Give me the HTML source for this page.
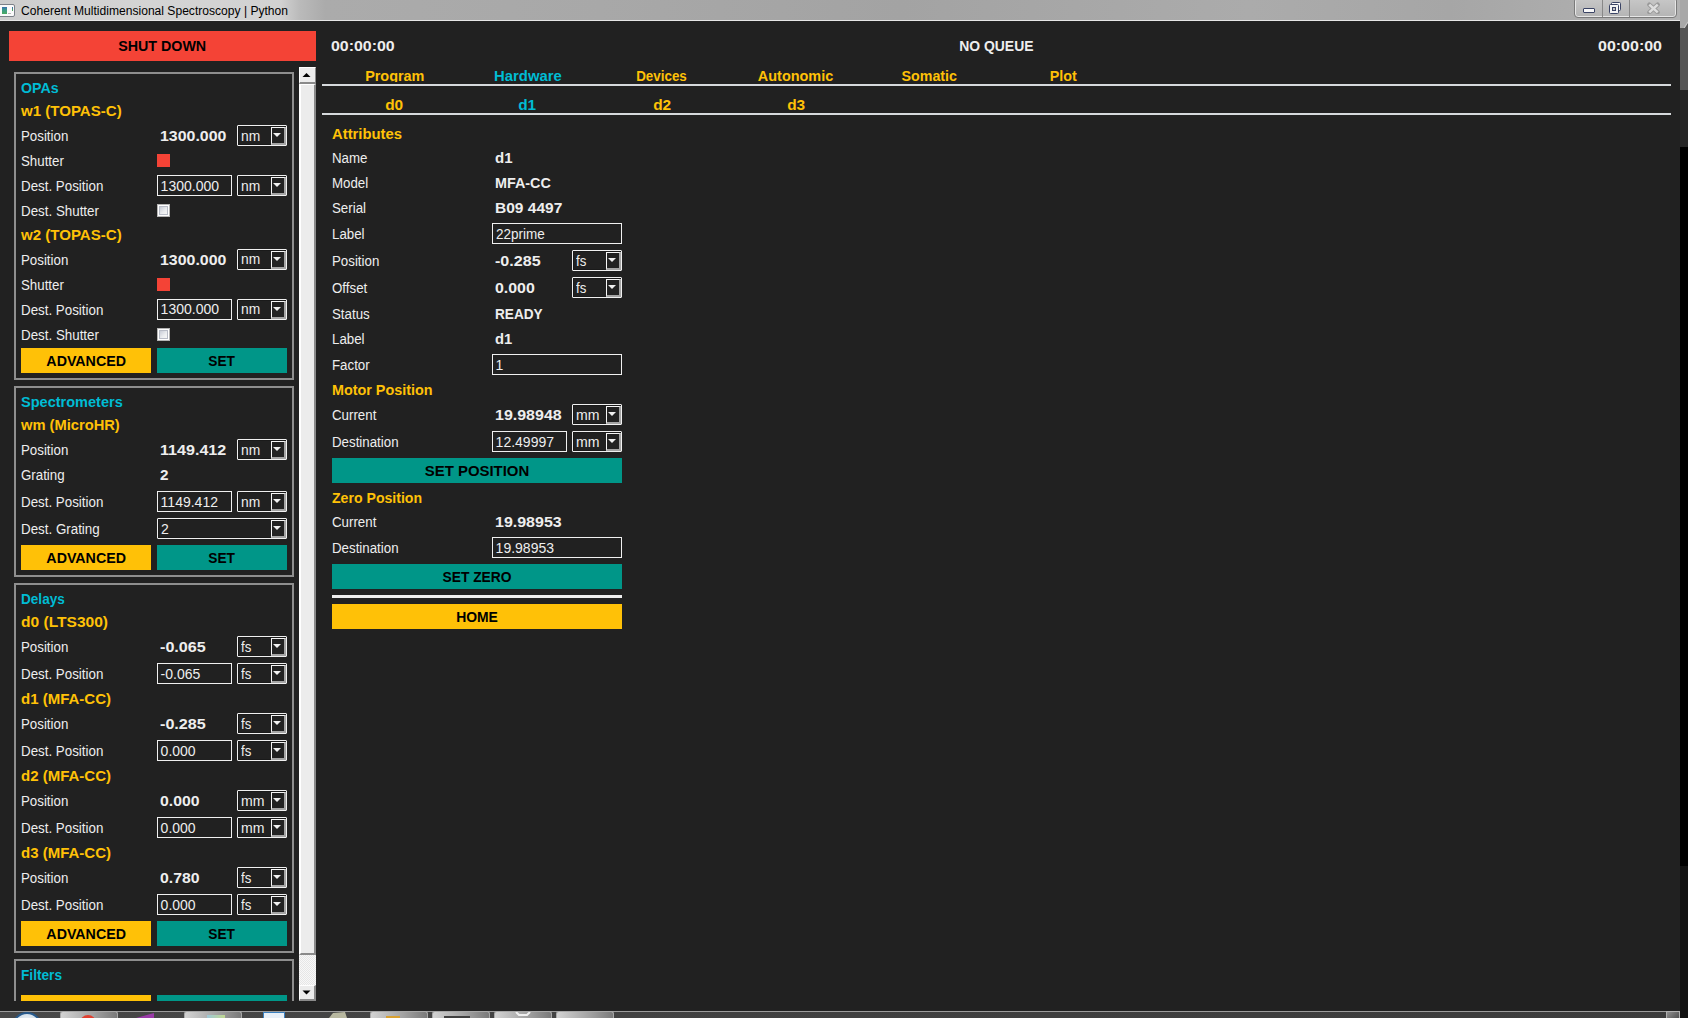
<!DOCTYPE html>
<html><head><meta charset="utf-8"><style>
html,body{margin:0;padding:0;}
body{width:1688px;height:1018px;overflow:hidden;position:relative;background:#212121;font-family:"Liberation Sans",sans-serif;}
.t{position:absolute;white-space:nowrap;line-height:20px;height:20px;}
</style></head><body>
<div style="position:absolute;left:0;top:0;width:1680px;height:20px;background:linear-gradient(to right,#cdcdcd 0,#d4d4d4 150px,#d2d2d2 280px,#bababa 300px,#ababab 325px,#a8a8a8 600px,#a3a3a3 900px,#ababab 1250px,#a6a6a6 1450px,#b2b2b2 1680px)"></div>
<div style="position:absolute;left:0px;top:20px;width:1680px;height:1px;background:#e6e6e6;"></div>
<div style="position:absolute;left:-4px;top:4px;width:19px;height:13px;box-sizing:border-box;border:1px solid #7c8088;border-radius:2px;background:#fafafa;"></div>
<div style="position:absolute;left:2px;top:7px;width:5px;height:7px;background:linear-gradient(#3c70b0,#3a9a8a 40%,#4aaa60);"></div>
<div style="position:absolute;left:12px;top:7px;width:1px;height:4px;background:linear-gradient(#3a6ab0,#50b050);"></div>
<div style="position:absolute;left:8px;top:13px;width:3px;height:1px;background:#b8b8b8;"></div>
<div class="t" style="left:21.00px;top:0.67px;font-size:12.5px;color:#000;transform:scaleX(0.9663);transform-origin:left 50%;">Coherent Multidimensional Spectroscopy | Python</div>
<div style="position:absolute;left:1574px;top:-3px;width:103px;height:21px;box-sizing:border-box;border:1px solid #7a7a7a;border-radius:4px;background:linear-gradient(#c8c8c8,#b4b4b4);box-shadow:inset 0 0 0 1px #e6e6e6"></div>
<div style="position:absolute;left:1602px;top:0px;width:1px;height:17px;background:#888;"></div>
<div style="position:absolute;left:1629px;top:0px;width:1px;height:17px;background:#888;"></div>
<div style="position:absolute;left:1583px;top:8px;width:12px;height:5px;box-sizing:border-box;border:1px solid #3b4465;border-radius:1px;background:#f8f8f8"></div>
<div style="position:absolute;left:1611px;top:2px;width:10px;height:9px;box-sizing:border-box;border:1px solid #3b4465;border-radius:1.5px;background:#f8f8f8"></div>
<div style="position:absolute;left:1609px;top:4px;width:10px;height:10px;box-sizing:border-box;border:1px solid #3b4465;border-radius:1.5px;background:#f4f4f4"></div>
<div style="position:absolute;left:1612px;top:7px;width:4px;height:4px;box-sizing:border-box;border:1px solid #3b4465;background:#c4c4c4"></div>
<svg style="position:absolute;left:1646px;top:2px" width="15" height="12"><path d="M3.3 2.6L11.7 10.4M11.7 2.6L3.3 10.4" stroke="#9a9a9a" stroke-width="4.2" stroke-linecap="round"/><path d="M3.3 2.6L11.7 10.4M11.7 2.6L3.3 10.4" stroke="#dedede" stroke-width="2.6"/></svg>
<div style="position:absolute;left:1680px;top:0px;width:8px;height:28px;background:#a8a8a8;"></div>
<svg style="position:absolute;left:1680px;top:20px" width="8" height="9"><path d="M0 9L0 8H4L8 2V9Z" fill="#555"/><path d="M0 8.5H3.8L8 2" stroke="#c8c8c8" stroke-width="1.2" fill="none"/></svg>
<div style="position:absolute;left:1680px;top:28px;width:8px;height:62px;background:#555;"></div>
<div style="position:absolute;left:1680px;top:90px;width:8px;height:57px;background:#262626;"></div>
<div style="position:absolute;left:1680px;top:147px;width:8px;height:719px;background:#000;"></div>
<div style="position:absolute;left:1680px;top:866px;width:8px;height:152px;background:#121212;"></div>
<div style="position:absolute;left:9px;top:31px;width:307px;height:30px;background:#f44336;"></div>
<div class="t" style="left:119.35px;top:36.15px;font-size:14.0px;font-weight:700;color:#000;transform:scaleX(1.0197);transform-origin:43.15px 50%;">SHUT DOWN</div>
<div style="position:absolute;left:0;top:67px;width:298px;height:934px;overflow:hidden">
<div style="position:absolute;left:0;top:-67px;width:298px;height:1018px">
<div style="position:absolute;left:14px;top:72px;width:280px;height:308px;box-sizing:border-box;border:2px solid #8e8e8e;"></div>
<div style="position:absolute;left:14px;top:386px;width:280px;height:191px;box-sizing:border-box;border:2px solid #8e8e8e;"></div>
<div style="position:absolute;left:14px;top:583px;width:280px;height:370px;box-sizing:border-box;border:2px solid #8e8e8e;"></div>
<div style="position:absolute;left:14px;top:959px;width:280px;height:71px;box-sizing:border-box;border:2px solid #8e8e8e;"></div>
<div class="t" style="left:21.00px;top:78.15px;font-size:14.0px;font-weight:700;color:#00bcd4;transform:scaleX(1.0162);transform-origin:left 50%;">OPAs</div>
<div class="t" style="left:21.05px;top:101.15px;font-size:14.0px;font-weight:700;color:#ffc107;transform:scaleX(1.0753);transform-origin:left 50%;">w1 (TOPAS-C)</div>
<div class="t" style="left:21.00px;top:126.15px;font-size:14.0px;color:#eeeeee;transform:scaleX(0.9500);transform-origin:left 50%;">Position</div>
<div class="t" style="left:160.30px;top:126.15px;font-size:14.0px;font-weight:700;color:#eeeeee;transform:scaleX(1.1370);transform-origin:left 50%;">1300.000</div>
<div style="position:absolute;left:237px;top:125px;width:50px;height:21px;box-sizing:border-box;border:1px solid #f0f0f0;border-radius:1px;box-shadow:inset 0 0 0 1px #1a1a1a;background:#212121;"></div>
<div style="position:absolute;left:271px;top:127px;width:15px;height:18px;box-sizing:border-box;border-top:1px solid #f6f6f6;border-left:1px solid #f6f6f6;border-right:2px solid #a4a4a4;border-bottom:2px solid #a4a4a4;background:#222;"></div>
<svg style="position:absolute;left:273px;top:133px" width="9" height="5"><path d="M0 0H8L4 4Z" fill="#f0f0f0"/></svg>
<div class="t" style="left:241.00px;top:125.65px;font-size:14.0px;color:#eeeeee;transform:scaleX(0.9871);transform-origin:left 50%;">nm</div>
<div class="t" style="left:21.00px;top:151.15px;font-size:14.0px;color:#eeeeee;transform:scaleX(0.9500);transform-origin:left 50%;">Shutter</div>
<div style="position:absolute;left:157px;top:154px;width:13px;height:13px;background:#f44336;"></div>
<div class="t" style="left:21.00px;top:176.15px;font-size:14.0px;color:#eeeeee;transform:scaleX(0.9536);transform-origin:left 50%;">Dest. Position</div>
<div style="position:absolute;left:157px;top:175px;width:75px;height:21px;box-sizing:border-box;border:1px solid #f0f0f0;background:#212121;"></div>
<div class="t" style="left:160.60px;top:175.65px;font-size:14.0px;color:#eeeeee;transform:scaleX(1.0000);transform-origin:left 50%;">1300.000</div>
<div style="position:absolute;left:237px;top:175px;width:50px;height:21px;box-sizing:border-box;border:1px solid #f0f0f0;border-radius:1px;box-shadow:inset 0 0 0 1px #1a1a1a;background:#212121;"></div>
<div style="position:absolute;left:271px;top:177px;width:15px;height:18px;box-sizing:border-box;border-top:1px solid #f6f6f6;border-left:1px solid #f6f6f6;border-right:2px solid #a4a4a4;border-bottom:2px solid #a4a4a4;background:#222;"></div>
<svg style="position:absolute;left:273px;top:183px" width="9" height="5"><path d="M0 0H8L4 4Z" fill="#f0f0f0"/></svg>
<div class="t" style="left:241.00px;top:175.65px;font-size:14.0px;color:#eeeeee;transform:scaleX(0.9871);transform-origin:left 50%;">nm</div>
<div class="t" style="left:21.00px;top:201.15px;font-size:14.0px;color:#eeeeee;transform:scaleX(0.9538);transform-origin:left 50%;">Dest. Shutter</div>
<div style="position:absolute;left:157px;top:204px;width:13px;height:13px;box-sizing:border-box;border:1px solid #b4b4b4;background:#fff;"></div>
<div style="position:absolute;left:159px;top:206px;width:9px;height:9px;box-sizing:border-box;border:1px solid #b8bcc6;background:linear-gradient(135deg,#c8ccd6,#eceef0 60%,#f6f6f6);"></div>
<div class="t" style="left:21.05px;top:224.65px;font-size:14.0px;font-weight:700;color:#ffc107;transform:scaleX(1.0753);transform-origin:left 50%;">w2 (TOPAS-C)</div>
<div class="t" style="left:21.00px;top:249.65px;font-size:14.0px;color:#eeeeee;transform:scaleX(0.9500);transform-origin:left 50%;">Position</div>
<div class="t" style="left:160.30px;top:249.65px;font-size:14.0px;font-weight:700;color:#eeeeee;transform:scaleX(1.1370);transform-origin:left 50%;">1300.000</div>
<div style="position:absolute;left:237px;top:248.5px;width:50px;height:21.0px;box-sizing:border-box;border:1px solid #f0f0f0;border-radius:1px;box-shadow:inset 0 0 0 1px #1a1a1a;background:#212121;"></div>
<div style="position:absolute;left:271px;top:250.5px;width:15px;height:18.0px;box-sizing:border-box;border-top:1px solid #f6f6f6;border-left:1px solid #f6f6f6;border-right:2px solid #a4a4a4;border-bottom:2px solid #a4a4a4;background:#222;"></div>
<svg style="position:absolute;left:273px;top:256.5px" width="9" height="5"><path d="M0 0H8L4 4Z" fill="#f0f0f0"/></svg>
<div class="t" style="left:241.00px;top:249.15px;font-size:14.0px;color:#eeeeee;transform:scaleX(0.9871);transform-origin:left 50%;">nm</div>
<div class="t" style="left:21.00px;top:274.65px;font-size:14.0px;color:#eeeeee;transform:scaleX(0.9500);transform-origin:left 50%;">Shutter</div>
<div style="position:absolute;left:157px;top:277.5px;width:13px;height:13.0px;background:#f44336;"></div>
<div class="t" style="left:21.00px;top:299.65px;font-size:14.0px;color:#eeeeee;transform:scaleX(0.9536);transform-origin:left 50%;">Dest. Position</div>
<div style="position:absolute;left:157px;top:298.5px;width:75px;height:21.0px;box-sizing:border-box;border:1px solid #f0f0f0;background:#212121;"></div>
<div class="t" style="left:160.60px;top:299.15px;font-size:14.0px;color:#eeeeee;transform:scaleX(1.0000);transform-origin:left 50%;">1300.000</div>
<div style="position:absolute;left:237px;top:298.5px;width:50px;height:21.0px;box-sizing:border-box;border:1px solid #f0f0f0;border-radius:1px;box-shadow:inset 0 0 0 1px #1a1a1a;background:#212121;"></div>
<div style="position:absolute;left:271px;top:300.5px;width:15px;height:18.0px;box-sizing:border-box;border-top:1px solid #f6f6f6;border-left:1px solid #f6f6f6;border-right:2px solid #a4a4a4;border-bottom:2px solid #a4a4a4;background:#222;"></div>
<svg style="position:absolute;left:273px;top:306.5px" width="9" height="5"><path d="M0 0H8L4 4Z" fill="#f0f0f0"/></svg>
<div class="t" style="left:241.00px;top:299.15px;font-size:14.0px;color:#eeeeee;transform:scaleX(0.9871);transform-origin:left 50%;">nm</div>
<div class="t" style="left:21.00px;top:324.65px;font-size:14.0px;color:#eeeeee;transform:scaleX(0.9538);transform-origin:left 50%;">Dest. Shutter</div>
<div style="position:absolute;left:157px;top:327.5px;width:13px;height:13.0px;box-sizing:border-box;border:1px solid #b4b4b4;background:#fff;"></div>
<div style="position:absolute;left:159px;top:329.5px;width:9px;height:9.0px;box-sizing:border-box;border:1px solid #b8bcc6;background:linear-gradient(135deg,#c8ccd6,#eceef0 60%,#f6f6f6);"></div>
<div style="position:absolute;left:21px;top:348px;width:130px;height:25px;background:#ffc107;"></div>
<div class="t" style="left:46.85px;top:351.15px;font-size:14.0px;font-weight:700;color:#000;transform:scaleX(1.0166);transform-origin:39.15px 50%;">ADVANCED</div>
<div style="position:absolute;left:157px;top:348px;width:130px;height:25px;background:#009688;"></div>
<div class="t" style="left:208.38px;top:351.15px;font-size:14.0px;font-weight:700;color:#000;transform:scaleX(0.9798);transform-origin:13.62px 50%;">SET</div>
<div class="t" style="left:21.00px;top:392.15px;font-size:14.0px;font-weight:700;color:#00bcd4;transform:scaleX(1.0382);transform-origin:left 50%;">Spectrometers</div>
<div class="t" style="left:21.05px;top:415.15px;font-size:14.0px;font-weight:700;color:#ffc107;transform:scaleX(1.0494);transform-origin:left 50%;">wm (MicroHR)</div>
<div class="t" style="left:21.00px;top:440.15px;font-size:14.0px;color:#eeeeee;transform:scaleX(0.9500);transform-origin:left 50%;">Position</div>
<div class="t" style="left:160.30px;top:440.15px;font-size:14.0px;font-weight:700;color:#eeeeee;transform:scaleX(1.1493);transform-origin:left 50%;">1149.412</div>
<div style="position:absolute;left:237px;top:439px;width:50px;height:21px;box-sizing:border-box;border:1px solid #f0f0f0;border-radius:1px;box-shadow:inset 0 0 0 1px #1a1a1a;background:#212121;"></div>
<div style="position:absolute;left:271px;top:441px;width:15px;height:18px;box-sizing:border-box;border-top:1px solid #f6f6f6;border-left:1px solid #f6f6f6;border-right:2px solid #a4a4a4;border-bottom:2px solid #a4a4a4;background:#222;"></div>
<svg style="position:absolute;left:273px;top:447px" width="9" height="5"><path d="M0 0H8L4 4Z" fill="#f0f0f0"/></svg>
<div class="t" style="left:241.00px;top:439.65px;font-size:14.0px;color:#eeeeee;transform:scaleX(0.9871);transform-origin:left 50%;">nm</div>
<div class="t" style="left:21.00px;top:465.15px;font-size:14.0px;color:#eeeeee;transform:scaleX(0.9500);transform-origin:left 50%;">Grating</div>
<div class="t" style="left:160.30px;top:465.15px;font-size:14.0px;font-weight:700;color:#eeeeee;transform:scaleX(1.0897);transform-origin:left 50%;">2</div>
<div class="t" style="left:21.00px;top:492.15px;font-size:14.0px;color:#eeeeee;transform:scaleX(0.9536);transform-origin:left 50%;">Dest. Position</div>
<div style="position:absolute;left:157px;top:491px;width:75px;height:21px;box-sizing:border-box;border:1px solid #f0f0f0;background:#212121;"></div>
<div class="t" style="left:160.60px;top:491.65px;font-size:14.0px;color:#eeeeee;transform:scaleX(1.0000);transform-origin:left 50%;">1149.412</div>
<div style="position:absolute;left:237px;top:491px;width:50px;height:21px;box-sizing:border-box;border:1px solid #f0f0f0;border-radius:1px;box-shadow:inset 0 0 0 1px #1a1a1a;background:#212121;"></div>
<div style="position:absolute;left:271px;top:493px;width:15px;height:18px;box-sizing:border-box;border-top:1px solid #f6f6f6;border-left:1px solid #f6f6f6;border-right:2px solid #a4a4a4;border-bottom:2px solid #a4a4a4;background:#222;"></div>
<svg style="position:absolute;left:273px;top:499px" width="9" height="5"><path d="M0 0H8L4 4Z" fill="#f0f0f0"/></svg>
<div class="t" style="left:241.00px;top:491.65px;font-size:14.0px;color:#eeeeee;transform:scaleX(0.9871);transform-origin:left 50%;">nm</div>
<div class="t" style="left:21.00px;top:519.15px;font-size:14.0px;color:#eeeeee;transform:scaleX(0.9538);transform-origin:left 50%;">Dest. Grating</div>
<div style="position:absolute;left:157px;top:518px;width:130px;height:21px;box-sizing:border-box;border:1px solid #f0f0f0;border-radius:1px;box-shadow:inset 0 0 0 1px #1a1a1a;background:#212121;"></div>
<div style="position:absolute;left:271px;top:520px;width:15px;height:18px;box-sizing:border-box;border-top:1px solid #f6f6f6;border-left:1px solid #f6f6f6;border-right:2px solid #a4a4a4;border-bottom:2px solid #a4a4a4;background:#222;"></div>
<svg style="position:absolute;left:273px;top:526px" width="9" height="5"><path d="M0 0H8L4 4Z" fill="#f0f0f0"/></svg>
<div class="t" style="left:161.00px;top:518.65px;font-size:14.0px;color:#eeeeee;transform:scaleX(1.0000);transform-origin:left 50%;">2</div>
<div style="position:absolute;left:21px;top:545px;width:130px;height:25px;background:#ffc107;"></div>
<div class="t" style="left:46.85px;top:548.15px;font-size:14.0px;font-weight:700;color:#000;transform:scaleX(1.0166);transform-origin:39.15px 50%;">ADVANCED</div>
<div style="position:absolute;left:157px;top:545px;width:130px;height:25px;background:#009688;"></div>
<div class="t" style="left:208.38px;top:548.15px;font-size:14.0px;font-weight:700;color:#000;transform:scaleX(0.9798);transform-origin:13.62px 50%;">SET</div>
<div class="t" style="left:21.00px;top:589.15px;font-size:14.0px;font-weight:700;color:#00bcd4;transform:scaleX(0.9701);transform-origin:left 50%;">Delays</div>
<div class="t" style="left:21.00px;top:612.15px;font-size:14.0px;font-weight:700;color:#ffc107;transform:scaleX(1.1111);transform-origin:left 50%;">d0 (LTS300)</div>
<div class="t" style="left:21.00px;top:637.15px;font-size:14.0px;color:#eeeeee;transform:scaleX(0.9500);transform-origin:left 50%;">Position</div>
<div class="t" style="left:160.30px;top:637.15px;font-size:14.0px;font-weight:700;color:#eeeeee;transform:scaleX(1.1537);transform-origin:left 50%;">-0.065</div>
<div style="position:absolute;left:237px;top:636px;width:50px;height:21px;box-sizing:border-box;border:1px solid #f0f0f0;border-radius:1px;box-shadow:inset 0 0 0 1px #1a1a1a;background:#212121;"></div>
<div style="position:absolute;left:271px;top:638px;width:15px;height:18px;box-sizing:border-box;border-top:1px solid #f6f6f6;border-left:1px solid #f6f6f6;border-right:2px solid #a4a4a4;border-bottom:2px solid #a4a4a4;background:#222;"></div>
<svg style="position:absolute;left:273px;top:644px" width="9" height="5"><path d="M0 0H8L4 4Z" fill="#f0f0f0"/></svg>
<div class="t" style="left:241.00px;top:636.65px;font-size:14.0px;color:#eeeeee;transform:scaleX(0.9450);transform-origin:left 50%;">fs</div>
<div class="t" style="left:21.00px;top:664.15px;font-size:14.0px;color:#eeeeee;transform:scaleX(0.9536);transform-origin:left 50%;">Dest. Position</div>
<div style="position:absolute;left:157px;top:663px;width:75px;height:21px;box-sizing:border-box;border:1px solid #f0f0f0;background:#212121;"></div>
<div class="t" style="left:160.60px;top:663.65px;font-size:14.0px;color:#eeeeee;transform:scaleX(1.0000);transform-origin:left 50%;">-0.065</div>
<div style="position:absolute;left:237px;top:663px;width:50px;height:21px;box-sizing:border-box;border:1px solid #f0f0f0;border-radius:1px;box-shadow:inset 0 0 0 1px #1a1a1a;background:#212121;"></div>
<div style="position:absolute;left:271px;top:665px;width:15px;height:18px;box-sizing:border-box;border-top:1px solid #f6f6f6;border-left:1px solid #f6f6f6;border-right:2px solid #a4a4a4;border-bottom:2px solid #a4a4a4;background:#222;"></div>
<svg style="position:absolute;left:273px;top:671px" width="9" height="5"><path d="M0 0H8L4 4Z" fill="#f0f0f0"/></svg>
<div class="t" style="left:241.00px;top:663.65px;font-size:14.0px;color:#eeeeee;transform:scaleX(0.9450);transform-origin:left 50%;">fs</div>
<div class="t" style="left:21.00px;top:689.15px;font-size:14.0px;font-weight:700;color:#ffc107;transform:scaleX(1.0714);transform-origin:left 50%;">d1 (MFA-CC)</div>
<div class="t" style="left:21.00px;top:714.15px;font-size:14.0px;color:#eeeeee;transform:scaleX(0.9500);transform-origin:left 50%;">Position</div>
<div class="t" style="left:160.30px;top:714.15px;font-size:14.0px;font-weight:700;color:#eeeeee;transform:scaleX(1.1537);transform-origin:left 50%;">-0.285</div>
<div style="position:absolute;left:237px;top:713px;width:50px;height:21px;box-sizing:border-box;border:1px solid #f0f0f0;border-radius:1px;box-shadow:inset 0 0 0 1px #1a1a1a;background:#212121;"></div>
<div style="position:absolute;left:271px;top:715px;width:15px;height:18px;box-sizing:border-box;border-top:1px solid #f6f6f6;border-left:1px solid #f6f6f6;border-right:2px solid #a4a4a4;border-bottom:2px solid #a4a4a4;background:#222;"></div>
<svg style="position:absolute;left:273px;top:721px" width="9" height="5"><path d="M0 0H8L4 4Z" fill="#f0f0f0"/></svg>
<div class="t" style="left:241.00px;top:713.65px;font-size:14.0px;color:#eeeeee;transform:scaleX(0.9450);transform-origin:left 50%;">fs</div>
<div class="t" style="left:21.00px;top:741.15px;font-size:14.0px;color:#eeeeee;transform:scaleX(0.9536);transform-origin:left 50%;">Dest. Position</div>
<div style="position:absolute;left:157px;top:740px;width:75px;height:21px;box-sizing:border-box;border:1px solid #f0f0f0;background:#212121;"></div>
<div class="t" style="left:160.60px;top:740.65px;font-size:14.0px;color:#eeeeee;transform:scaleX(1.0000);transform-origin:left 50%;">0.000</div>
<div style="position:absolute;left:237px;top:740px;width:50px;height:21px;box-sizing:border-box;border:1px solid #f0f0f0;border-radius:1px;box-shadow:inset 0 0 0 1px #1a1a1a;background:#212121;"></div>
<div style="position:absolute;left:271px;top:742px;width:15px;height:18px;box-sizing:border-box;border-top:1px solid #f6f6f6;border-left:1px solid #f6f6f6;border-right:2px solid #a4a4a4;border-bottom:2px solid #a4a4a4;background:#222;"></div>
<svg style="position:absolute;left:273px;top:748px" width="9" height="5"><path d="M0 0H8L4 4Z" fill="#f0f0f0"/></svg>
<div class="t" style="left:241.00px;top:740.65px;font-size:14.0px;color:#eeeeee;transform:scaleX(0.9450);transform-origin:left 50%;">fs</div>
<div class="t" style="left:21.00px;top:766.15px;font-size:14.0px;font-weight:700;color:#ffc107;transform:scaleX(1.0714);transform-origin:left 50%;">d2 (MFA-CC)</div>
<div class="t" style="left:21.00px;top:791.15px;font-size:14.0px;color:#eeeeee;transform:scaleX(0.9500);transform-origin:left 50%;">Position</div>
<div class="t" style="left:160.30px;top:791.15px;font-size:14.0px;font-weight:700;color:#eeeeee;transform:scaleX(1.1270);transform-origin:left 50%;">0.000</div>
<div style="position:absolute;left:237px;top:790px;width:50px;height:21px;box-sizing:border-box;border:1px solid #f0f0f0;border-radius:1px;box-shadow:inset 0 0 0 1px #1a1a1a;background:#212121;"></div>
<div style="position:absolute;left:271px;top:792px;width:15px;height:18px;box-sizing:border-box;border-top:1px solid #f6f6f6;border-left:1px solid #f6f6f6;border-right:2px solid #a4a4a4;border-bottom:2px solid #a4a4a4;background:#222;"></div>
<svg style="position:absolute;left:273px;top:798px" width="9" height="5"><path d="M0 0H8L4 4Z" fill="#f0f0f0"/></svg>
<div class="t" style="left:241.00px;top:790.65px;font-size:14.0px;color:#eeeeee;transform:scaleX(1.0064);transform-origin:left 50%;">mm</div>
<div class="t" style="left:21.00px;top:818.15px;font-size:14.0px;color:#eeeeee;transform:scaleX(0.9536);transform-origin:left 50%;">Dest. Position</div>
<div style="position:absolute;left:157px;top:817px;width:75px;height:21px;box-sizing:border-box;border:1px solid #f0f0f0;background:#212121;"></div>
<div class="t" style="left:160.60px;top:817.65px;font-size:14.0px;color:#eeeeee;transform:scaleX(1.0000);transform-origin:left 50%;">0.000</div>
<div style="position:absolute;left:237px;top:817px;width:50px;height:21px;box-sizing:border-box;border:1px solid #f0f0f0;border-radius:1px;box-shadow:inset 0 0 0 1px #1a1a1a;background:#212121;"></div>
<div style="position:absolute;left:271px;top:819px;width:15px;height:18px;box-sizing:border-box;border-top:1px solid #f6f6f6;border-left:1px solid #f6f6f6;border-right:2px solid #a4a4a4;border-bottom:2px solid #a4a4a4;background:#222;"></div>
<svg style="position:absolute;left:273px;top:825px" width="9" height="5"><path d="M0 0H8L4 4Z" fill="#f0f0f0"/></svg>
<div class="t" style="left:241.00px;top:817.65px;font-size:14.0px;color:#eeeeee;transform:scaleX(1.0064);transform-origin:left 50%;">mm</div>
<div class="t" style="left:21.00px;top:843.15px;font-size:14.0px;font-weight:700;color:#ffc107;transform:scaleX(1.0714);transform-origin:left 50%;">d3 (MFA-CC)</div>
<div class="t" style="left:21.00px;top:868.15px;font-size:14.0px;color:#eeeeee;transform:scaleX(0.9500);transform-origin:left 50%;">Position</div>
<div class="t" style="left:160.30px;top:868.15px;font-size:14.0px;font-weight:700;color:#eeeeee;transform:scaleX(1.1270);transform-origin:left 50%;">0.780</div>
<div style="position:absolute;left:237px;top:867px;width:50px;height:21px;box-sizing:border-box;border:1px solid #f0f0f0;border-radius:1px;box-shadow:inset 0 0 0 1px #1a1a1a;background:#212121;"></div>
<div style="position:absolute;left:271px;top:869px;width:15px;height:18px;box-sizing:border-box;border-top:1px solid #f6f6f6;border-left:1px solid #f6f6f6;border-right:2px solid #a4a4a4;border-bottom:2px solid #a4a4a4;background:#222;"></div>
<svg style="position:absolute;left:273px;top:875px" width="9" height="5"><path d="M0 0H8L4 4Z" fill="#f0f0f0"/></svg>
<div class="t" style="left:241.00px;top:867.65px;font-size:14.0px;color:#eeeeee;transform:scaleX(0.9450);transform-origin:left 50%;">fs</div>
<div class="t" style="left:21.00px;top:895.15px;font-size:14.0px;color:#eeeeee;transform:scaleX(0.9536);transform-origin:left 50%;">Dest. Position</div>
<div style="position:absolute;left:157px;top:894px;width:75px;height:21px;box-sizing:border-box;border:1px solid #f0f0f0;background:#212121;"></div>
<div class="t" style="left:160.60px;top:894.65px;font-size:14.0px;color:#eeeeee;transform:scaleX(1.0000);transform-origin:left 50%;">0.000</div>
<div style="position:absolute;left:237px;top:894px;width:50px;height:21px;box-sizing:border-box;border:1px solid #f0f0f0;border-radius:1px;box-shadow:inset 0 0 0 1px #1a1a1a;background:#212121;"></div>
<div style="position:absolute;left:271px;top:896px;width:15px;height:18px;box-sizing:border-box;border-top:1px solid #f6f6f6;border-left:1px solid #f6f6f6;border-right:2px solid #a4a4a4;border-bottom:2px solid #a4a4a4;background:#222;"></div>
<svg style="position:absolute;left:273px;top:902px" width="9" height="5"><path d="M0 0H8L4 4Z" fill="#f0f0f0"/></svg>
<div class="t" style="left:241.00px;top:894.65px;font-size:14.0px;color:#eeeeee;transform:scaleX(0.9450);transform-origin:left 50%;">fs</div>
<div style="position:absolute;left:21px;top:921px;width:130px;height:25px;background:#ffc107;"></div>
<div class="t" style="left:46.85px;top:924.15px;font-size:14.0px;font-weight:700;color:#000;transform:scaleX(1.0166);transform-origin:39.15px 50%;">ADVANCED</div>
<div style="position:absolute;left:157px;top:921px;width:130px;height:25px;background:#009688;"></div>
<div class="t" style="left:208.38px;top:924.15px;font-size:14.0px;font-weight:700;color:#000;transform:scaleX(0.9798);transform-origin:13.62px 50%;">SET</div>
<div class="t" style="left:21.00px;top:965.15px;font-size:14.0px;font-weight:700;color:#00bcd4;transform:scaleX(0.9762);transform-origin:left 50%;">Filters</div>
<div style="position:absolute;left:21px;top:995px;width:130px;height:25px;background:#ffc107;"></div>
<div style="position:absolute;left:157px;top:995px;width:130px;height:25px;background:#009688;"></div>
</div></div>
<div style="position:absolute;left:299px;top:67px;width:17px;height:934px;background:#f0f0f0;background-image:repeating-conic-gradient(#f8f8f8 0 25%,#e6e6e6 0 50%);background-size:2px 2px;"></div>
<div style="position:absolute;left:299px;top:67px;width:17px;height:17px;box-sizing:border-box;background:#ececec;border-top:1px solid #fff;border-left:1px solid #fff;border-right:1px solid #8a8a8a;border-bottom:2px solid #8a8a8a;"></div>
<svg style="position:absolute;left:302px;top:72px" width="11" height="6"><path d="M0.5 5H8.5L4.5 1Z" fill="#000"/></svg>
<div style="position:absolute;left:299px;top:84px;width:17px;height:871px;box-sizing:border-box;background:#ececec;border-top:1px solid #fff;border-left:2px solid #fff;border-right:2px solid #8a8a8a;border-bottom:2px solid #8a8a8a;"></div>
<div style="position:absolute;left:299px;top:985px;width:17px;height:16px;box-sizing:border-box;background:#ececec;border-top:1px solid #fff;border-left:1px solid #fff;border-right:2px solid #8a8a8a;border-bottom:2px solid #8a8a8a;"></div>
<svg style="position:absolute;left:302px;top:990px" width="11" height="6"><path d="M0.5 0.5H8.5L4.5 4.5Z" fill="#000"/></svg>
<div class="t" style="left:331.30px;top:36.15px;font-size:14.0px;font-weight:700;color:#eeeeee;transform:scaleX(1.1365);transform-origin:left 50%;">00:00:00</div>
<div class="t" style="left:959.25px;top:36.15px;font-size:14.0px;font-weight:700;color:#eeeeee;transform:scaleX(0.9946);transform-origin:37.35px 50%;">NO QUEUE</div>
<div class="t" style="left:1598.00px;top:36.15px;font-size:14.0px;font-weight:700;color:#eeeeee;transform:scaleX(1.1418);transform-origin:left 50%;">00:00:00</div>
<div style="position:absolute;left:324.4px;top:60px;width:140px;height:22px;overflow:hidden">
<div class="t" style="left:41.23px;top:6.15px;font-size:14.0px;font-weight:700;color:#ffc107;transform:scaleX(1.0304);transform-origin:28.77px 50%;">Program</div>
</div>
<div style="position:absolute;left:458.4px;top:60px;width:140px;height:22px;overflow:hidden">
<div class="t" style="left:38.10px;top:6.15px;font-size:14.0px;font-weight:700;color:#00bcd4;transform:scaleX(1.0596);transform-origin:31.90px 50%;">Hardware</div>
</div>
<div style="position:absolute;left:591.8px;top:60px;width:140px;height:22px;overflow:hidden">
<div class="t" style="left:43.52px;top:6.15px;font-size:14.0px;font-weight:700;color:#ffc107;transform:scaleX(0.9556);transform-origin:26.48px 50%;">Devices</div>
</div>
<div style="position:absolute;left:725.7px;top:60px;width:140px;height:22px;overflow:hidden">
<div class="t" style="left:33.45px;top:6.15px;font-size:14.0px;font-weight:700;color:#ffc107;transform:scaleX(1.0315);transform-origin:36.55px 50%;">Autonomic</div>
</div>
<div style="position:absolute;left:859.7px;top:60px;width:140px;height:22px;overflow:hidden">
<div class="t" style="left:42.77px;top:6.15px;font-size:14.0px;font-weight:700;color:#ffc107;transform:scaleX(1.0174);transform-origin:27.23px 50%;">Somatic</div>
</div>
<div style="position:absolute;left:993.4px;top:60px;width:140px;height:22px;overflow:hidden">
<div class="t" style="left:56.77px;top:6.15px;font-size:14.0px;font-weight:700;color:#ffc107;transform:scaleX(1.0208);transform-origin:13.22px 50%;">Plot</div>
</div>
<div style="position:absolute;left:322px;top:84px;width:1349px;height:2px;background:#d6d9dc;"></div>
<div class="t" style="left:385.82px;top:95.15px;font-size:14.0px;font-weight:700;color:#ffc107;transform:scaleX(1.1009);transform-origin:8.18px 50%;">d0</div>
<div class="t" style="left:519.33px;top:95.15px;font-size:14.0px;font-weight:700;color:#00bcd4;transform:scaleX(1.1009);transform-origin:8.18px 50%;">d1</div>
<div class="t" style="left:653.73px;top:95.15px;font-size:14.0px;font-weight:700;color:#ffc107;transform:scaleX(1.1009);transform-origin:8.18px 50%;">d2</div>
<div class="t" style="left:788.12px;top:95.15px;font-size:14.0px;font-weight:700;color:#ffc107;transform:scaleX(1.1009);transform-origin:8.18px 50%;">d3</div>
<div style="position:absolute;left:322px;top:113px;width:1349px;height:2px;background:#d6d9dc;"></div>
<div class="t" style="left:332.00px;top:124.15px;font-size:14.0px;font-weight:700;color:#ffc107;transform:scaleX(1.0590);transform-origin:left 50%;">Attributes</div>
<div class="t" style="left:332.00px;top:148.15px;font-size:14.0px;color:#eeeeee;transform:scaleX(0.9500);transform-origin:left 50%;">Name</div>
<div class="t" style="left:495.40px;top:148.15px;font-size:14.0px;font-weight:700;color:#eeeeee;transform:scaleX(1.0703);transform-origin:left 50%;">d1</div>
<div class="t" style="left:332.00px;top:173.15px;font-size:14.0px;color:#eeeeee;transform:scaleX(0.9500);transform-origin:left 50%;">Model</div>
<div class="t" style="left:495.40px;top:173.15px;font-size:14.0px;font-weight:700;color:#eeeeee;transform:scaleX(1.0266);transform-origin:left 50%;">MFA-CC</div>
<div class="t" style="left:332.00px;top:198.15px;font-size:14.0px;color:#eeeeee;transform:scaleX(0.9500);transform-origin:left 50%;">Serial</div>
<div class="t" style="left:495.40px;top:198.15px;font-size:14.0px;font-weight:700;color:#eeeeee;transform:scaleX(1.1087);transform-origin:left 50%;">B09 4497</div>
<div class="t" style="left:332.00px;top:224.15px;font-size:14.0px;color:#eeeeee;transform:scaleX(0.9500);transform-origin:left 50%;">Label</div>
<div style="position:absolute;left:492px;top:223px;width:130px;height:21px;box-sizing:border-box;border:1px solid #f0f0f0;background:#212121;"></div>
<div class="t" style="left:495.60px;top:223.65px;font-size:14.0px;color:#eeeeee;transform:scaleX(0.9643);transform-origin:left 50%;">22prime</div>
<div class="t" style="left:332.00px;top:251.15px;font-size:14.0px;color:#eeeeee;transform:scaleX(0.9500);transform-origin:left 50%;">Position</div>
<div class="t" style="left:495.40px;top:251.15px;font-size:14.0px;font-weight:700;color:#eeeeee;transform:scaleX(1.1486);transform-origin:left 50%;">-0.285</div>
<div style="position:absolute;left:572px;top:250px;width:50px;height:21px;box-sizing:border-box;border:1px solid #f0f0f0;border-radius:1px;box-shadow:inset 0 0 0 1px #1a1a1a;background:#212121;"></div>
<div style="position:absolute;left:606px;top:252px;width:15px;height:18px;box-sizing:border-box;border-top:1px solid #f6f6f6;border-left:1px solid #f6f6f6;border-right:2px solid #a4a4a4;border-bottom:2px solid #a4a4a4;background:#222;"></div>
<svg style="position:absolute;left:608px;top:258px" width="9" height="5"><path d="M0 0H8L4 4Z" fill="#f0f0f0"/></svg>
<div class="t" style="left:576.00px;top:250.65px;font-size:14.0px;color:#eeeeee;transform:scaleX(0.9450);transform-origin:left 50%;">fs</div>
<div class="t" style="left:332.00px;top:278.15px;font-size:14.0px;color:#eeeeee;transform:scaleX(0.9500);transform-origin:left 50%;">Offset</div>
<div class="t" style="left:495.40px;top:278.15px;font-size:14.0px;font-weight:700;color:#eeeeee;transform:scaleX(1.1355);transform-origin:left 50%;">0.000</div>
<div style="position:absolute;left:572px;top:277px;width:50px;height:21px;box-sizing:border-box;border:1px solid #f0f0f0;border-radius:1px;box-shadow:inset 0 0 0 1px #1a1a1a;background:#212121;"></div>
<div style="position:absolute;left:606px;top:279px;width:15px;height:18px;box-sizing:border-box;border-top:1px solid #f6f6f6;border-left:1px solid #f6f6f6;border-right:2px solid #a4a4a4;border-bottom:2px solid #a4a4a4;background:#222;"></div>
<svg style="position:absolute;left:608px;top:285px" width="9" height="5"><path d="M0 0H8L4 4Z" fill="#f0f0f0"/></svg>
<div class="t" style="left:576.00px;top:277.65px;font-size:14.0px;color:#eeeeee;transform:scaleX(0.9450);transform-origin:left 50%;">fs</div>
<div class="t" style="left:332.00px;top:304.15px;font-size:14.0px;color:#eeeeee;transform:scaleX(0.9500);transform-origin:left 50%;">Status</div>
<div class="t" style="left:495.40px;top:304.15px;font-size:14.0px;font-weight:700;color:#eeeeee;transform:scaleX(0.9714);transform-origin:left 50%;">READY</div>
<div class="t" style="left:332.00px;top:329.15px;font-size:14.0px;color:#eeeeee;transform:scaleX(0.9500);transform-origin:left 50%;">Label</div>
<div class="t" style="left:495.40px;top:329.15px;font-size:14.0px;font-weight:700;color:#eeeeee;transform:scaleX(1.0520);transform-origin:left 50%;">d1</div>
<div class="t" style="left:332.00px;top:355.15px;font-size:14.0px;color:#eeeeee;transform:scaleX(0.9500);transform-origin:left 50%;">Factor</div>
<div style="position:absolute;left:492px;top:354px;width:130px;height:21px;box-sizing:border-box;border:1px solid #f0f0f0;background:#212121;"></div>
<div class="t" style="left:495.60px;top:354.65px;font-size:14.0px;color:#eeeeee;transform:scaleX(1.0000);transform-origin:left 50%;">1</div>
<div class="t" style="left:332.00px;top:380.15px;font-size:14.0px;font-weight:700;color:#ffc107;transform:scaleX(1.0255);transform-origin:left 50%;">Motor Position</div>
<div class="t" style="left:332.00px;top:405.15px;font-size:14.0px;color:#eeeeee;transform:scaleX(0.9500);transform-origin:left 50%;">Current</div>
<div class="t" style="left:495.40px;top:405.15px;font-size:14.0px;font-weight:700;color:#eeeeee;transform:scaleX(1.1421);transform-origin:left 50%;">19.98948</div>
<div style="position:absolute;left:572px;top:404px;width:50px;height:21px;box-sizing:border-box;border:1px solid #f0f0f0;border-radius:1px;box-shadow:inset 0 0 0 1px #1a1a1a;background:#212121;"></div>
<div style="position:absolute;left:606px;top:406px;width:15px;height:18px;box-sizing:border-box;border-top:1px solid #f6f6f6;border-left:1px solid #f6f6f6;border-right:2px solid #a4a4a4;border-bottom:2px solid #a4a4a4;background:#222;"></div>
<svg style="position:absolute;left:608px;top:412px" width="9" height="5"><path d="M0 0H8L4 4Z" fill="#f0f0f0"/></svg>
<div class="t" style="left:576.00px;top:404.65px;font-size:14.0px;color:#eeeeee;transform:scaleX(1.0064);transform-origin:left 50%;">mm</div>
<div class="t" style="left:332.00px;top:432.15px;font-size:14.0px;color:#eeeeee;transform:scaleX(0.9500);transform-origin:left 50%;">Destination</div>
<div style="position:absolute;left:492px;top:431px;width:75px;height:21px;box-sizing:border-box;border:1px solid #f0f0f0;background:#212121;"></div>
<div class="t" style="left:495.60px;top:431.65px;font-size:14.0px;color:#eeeeee;transform:scaleX(1.0000);transform-origin:left 50%;">12.49997</div>
<div style="position:absolute;left:572px;top:431px;width:50px;height:21px;box-sizing:border-box;border:1px solid #f0f0f0;border-radius:1px;box-shadow:inset 0 0 0 1px #1a1a1a;background:#212121;"></div>
<div style="position:absolute;left:606px;top:433px;width:15px;height:18px;box-sizing:border-box;border-top:1px solid #f6f6f6;border-left:1px solid #f6f6f6;border-right:2px solid #a4a4a4;border-bottom:2px solid #a4a4a4;background:#222;"></div>
<svg style="position:absolute;left:608px;top:439px" width="9" height="5"><path d="M0 0H8L4 4Z" fill="#f0f0f0"/></svg>
<div class="t" style="left:576.00px;top:431.65px;font-size:14.0px;color:#eeeeee;transform:scaleX(1.0064);transform-origin:left 50%;">mm</div>
<div style="position:absolute;left:332px;top:458px;width:290px;height:25px;background:#009688;"></div>
<div class="t" style="left:428.00px;top:461.15px;font-size:14.0px;font-weight:700;color:#000;transform:scaleX(1.0663);transform-origin:49.00px 50%;">SET POSITION</div>
<div class="t" style="left:332.00px;top:488.15px;font-size:14.0px;font-weight:700;color:#ffc107;transform:scaleX(1.0073);transform-origin:left 50%;">Zero Position</div>
<div class="t" style="left:332.00px;top:512.15px;font-size:14.0px;color:#eeeeee;transform:scaleX(0.9500);transform-origin:left 50%;">Current</div>
<div class="t" style="left:495.40px;top:512.15px;font-size:14.0px;font-weight:700;color:#eeeeee;transform:scaleX(1.1421);transform-origin:left 50%;">19.98953</div>
<div class="t" style="left:332.00px;top:538.15px;font-size:14.0px;color:#eeeeee;transform:scaleX(0.9500);transform-origin:left 50%;">Destination</div>
<div style="position:absolute;left:492px;top:537px;width:130px;height:21px;box-sizing:border-box;border:1px solid #f0f0f0;background:#212121;"></div>
<div class="t" style="left:495.60px;top:537.65px;font-size:14.0px;color:#eeeeee;transform:scaleX(1.0000);transform-origin:left 50%;">19.98953</div>
<div style="position:absolute;left:332px;top:564px;width:290px;height:25px;background:#009688;"></div>
<div class="t" style="left:442.00px;top:567.15px;font-size:14.0px;font-weight:700;color:#000;transform:scaleX(0.9871);transform-origin:35.00px 50%;">SET ZERO</div>
<div style="position:absolute;left:332px;top:595px;width:290px;height:3px;background:#eeeeee;"></div>
<div style="position:absolute;left:332px;top:604px;width:290px;height:25px;background:#ffc107;"></div>
<div class="t" style="left:456.00px;top:607.15px;font-size:14.0px;font-weight:700;color:#000;transform:scaleX(0.9929);transform-origin:21.00px 50%;">HOME</div>
<div style="position:absolute;left:0px;top:1011px;width:1680px;height:1px;background:#9c9c9c;"></div>
<div style="position:absolute;left:0px;top:1012px;width:1680px;height:6px;background:linear-gradient(to right,#484848,#404040 50%,#3c3c3c);"></div>
<div style="position:absolute;left:12px;top:1012px;width:30px;height:30px;box-sizing:border-box;border-radius:50%;background:radial-gradient(circle at 50% 30%,#f0f4f8,#a8c0d4);border:2px solid #285a8c"></div>
<div style="position:absolute;left:60px;top:1011px;width:58px;height:7px;box-sizing:border-box;border:1px solid #a8a8a8;border-bottom:none;border-radius:3px 3px 0 0;background:linear-gradient(to right,#d2d2d2,#a0a0a0 60%,#7a7a7a);"></div>
<div style="position:absolute;left:184px;top:1011px;width:58px;height:7px;box-sizing:border-box;border:1px solid #a8a8a8;border-bottom:none;border-radius:3px 3px 0 0;background:linear-gradient(to right,#d2d2d2,#a0a0a0 60%,#7a7a7a);"></div>
<div style="position:absolute;left:370px;top:1011px;width:58px;height:7px;box-sizing:border-box;border:1px solid #a8a8a8;border-bottom:none;border-radius:3px 3px 0 0;background:linear-gradient(to right,#d2d2d2,#a0a0a0 60%,#7a7a7a);"></div>
<div style="position:absolute;left:432px;top:1011px;width:58px;height:7px;box-sizing:border-box;border:1px solid #a8a8a8;border-bottom:none;border-radius:3px 3px 0 0;background:linear-gradient(to right,#d2d2d2,#a0a0a0 60%,#7a7a7a);"></div>
<div style="position:absolute;left:494px;top:1011px;width:58px;height:7px;box-sizing:border-box;border:1px solid #a8a8a8;border-bottom:none;border-radius:3px 3px 0 0;background:linear-gradient(to right,#d2d2d2,#a0a0a0 60%,#7a7a7a);"></div>
<div style="position:absolute;left:556px;top:1011px;width:58px;height:7px;box-sizing:border-box;border:1px solid #a8a8a8;border-bottom:none;border-radius:3px 3px 0 0;background:linear-gradient(to right,#d2d2d2,#a0a0a0 60%,#7a7a7a);"></div>
<div style="position:absolute;left:80px;top:1015px;width:16px;height:16px;border-radius:50%;background:#e04030"></div>
<svg style="position:absolute;left:136px;top:1013px" width="18" height="5"><path d="M0 5L18 0V5Z" fill="#9a3aa8"/></svg>
<div style="position:absolute;left:207px;top:1015px;width:18px;height:3px;background:linear-gradient(to right,#9ec8d8,#c0d890);"></div>
<div style="position:absolute;left:263px;top:1012px;width:22px;height:6px;box-sizing:border-box;border:1px solid #3a80c0;border-bottom:none;background:#e8f0f8;"></div>
<svg style="position:absolute;left:329px;top:1012px" width="18" height="6"><path d="M0 6L4 1L16 0L18 6Z" fill="#b8b8a0"/></svg>
<div style="position:absolute;left:386px;top:1016px;width:14px;height:2px;background:#d8a030;"></div>
<div style="position:absolute;left:444px;top:1016px;width:26px;height:2px;background:#404040;"></div>
<svg style="position:absolute;left:515px;top:1012px" width="16" height="6"><path d="M1 0L4 3H12L15 0" stroke="#f0f0f0" stroke-width="2" fill="none"/></svg>
<div style="position:absolute;left:1666px;top:1011px;width:14px;height:7px;box-sizing:border-box;border:1px solid #b0b0b0;border-bottom:none;background:linear-gradient(135deg,#909090,#505050);"></div>
</body></html>
